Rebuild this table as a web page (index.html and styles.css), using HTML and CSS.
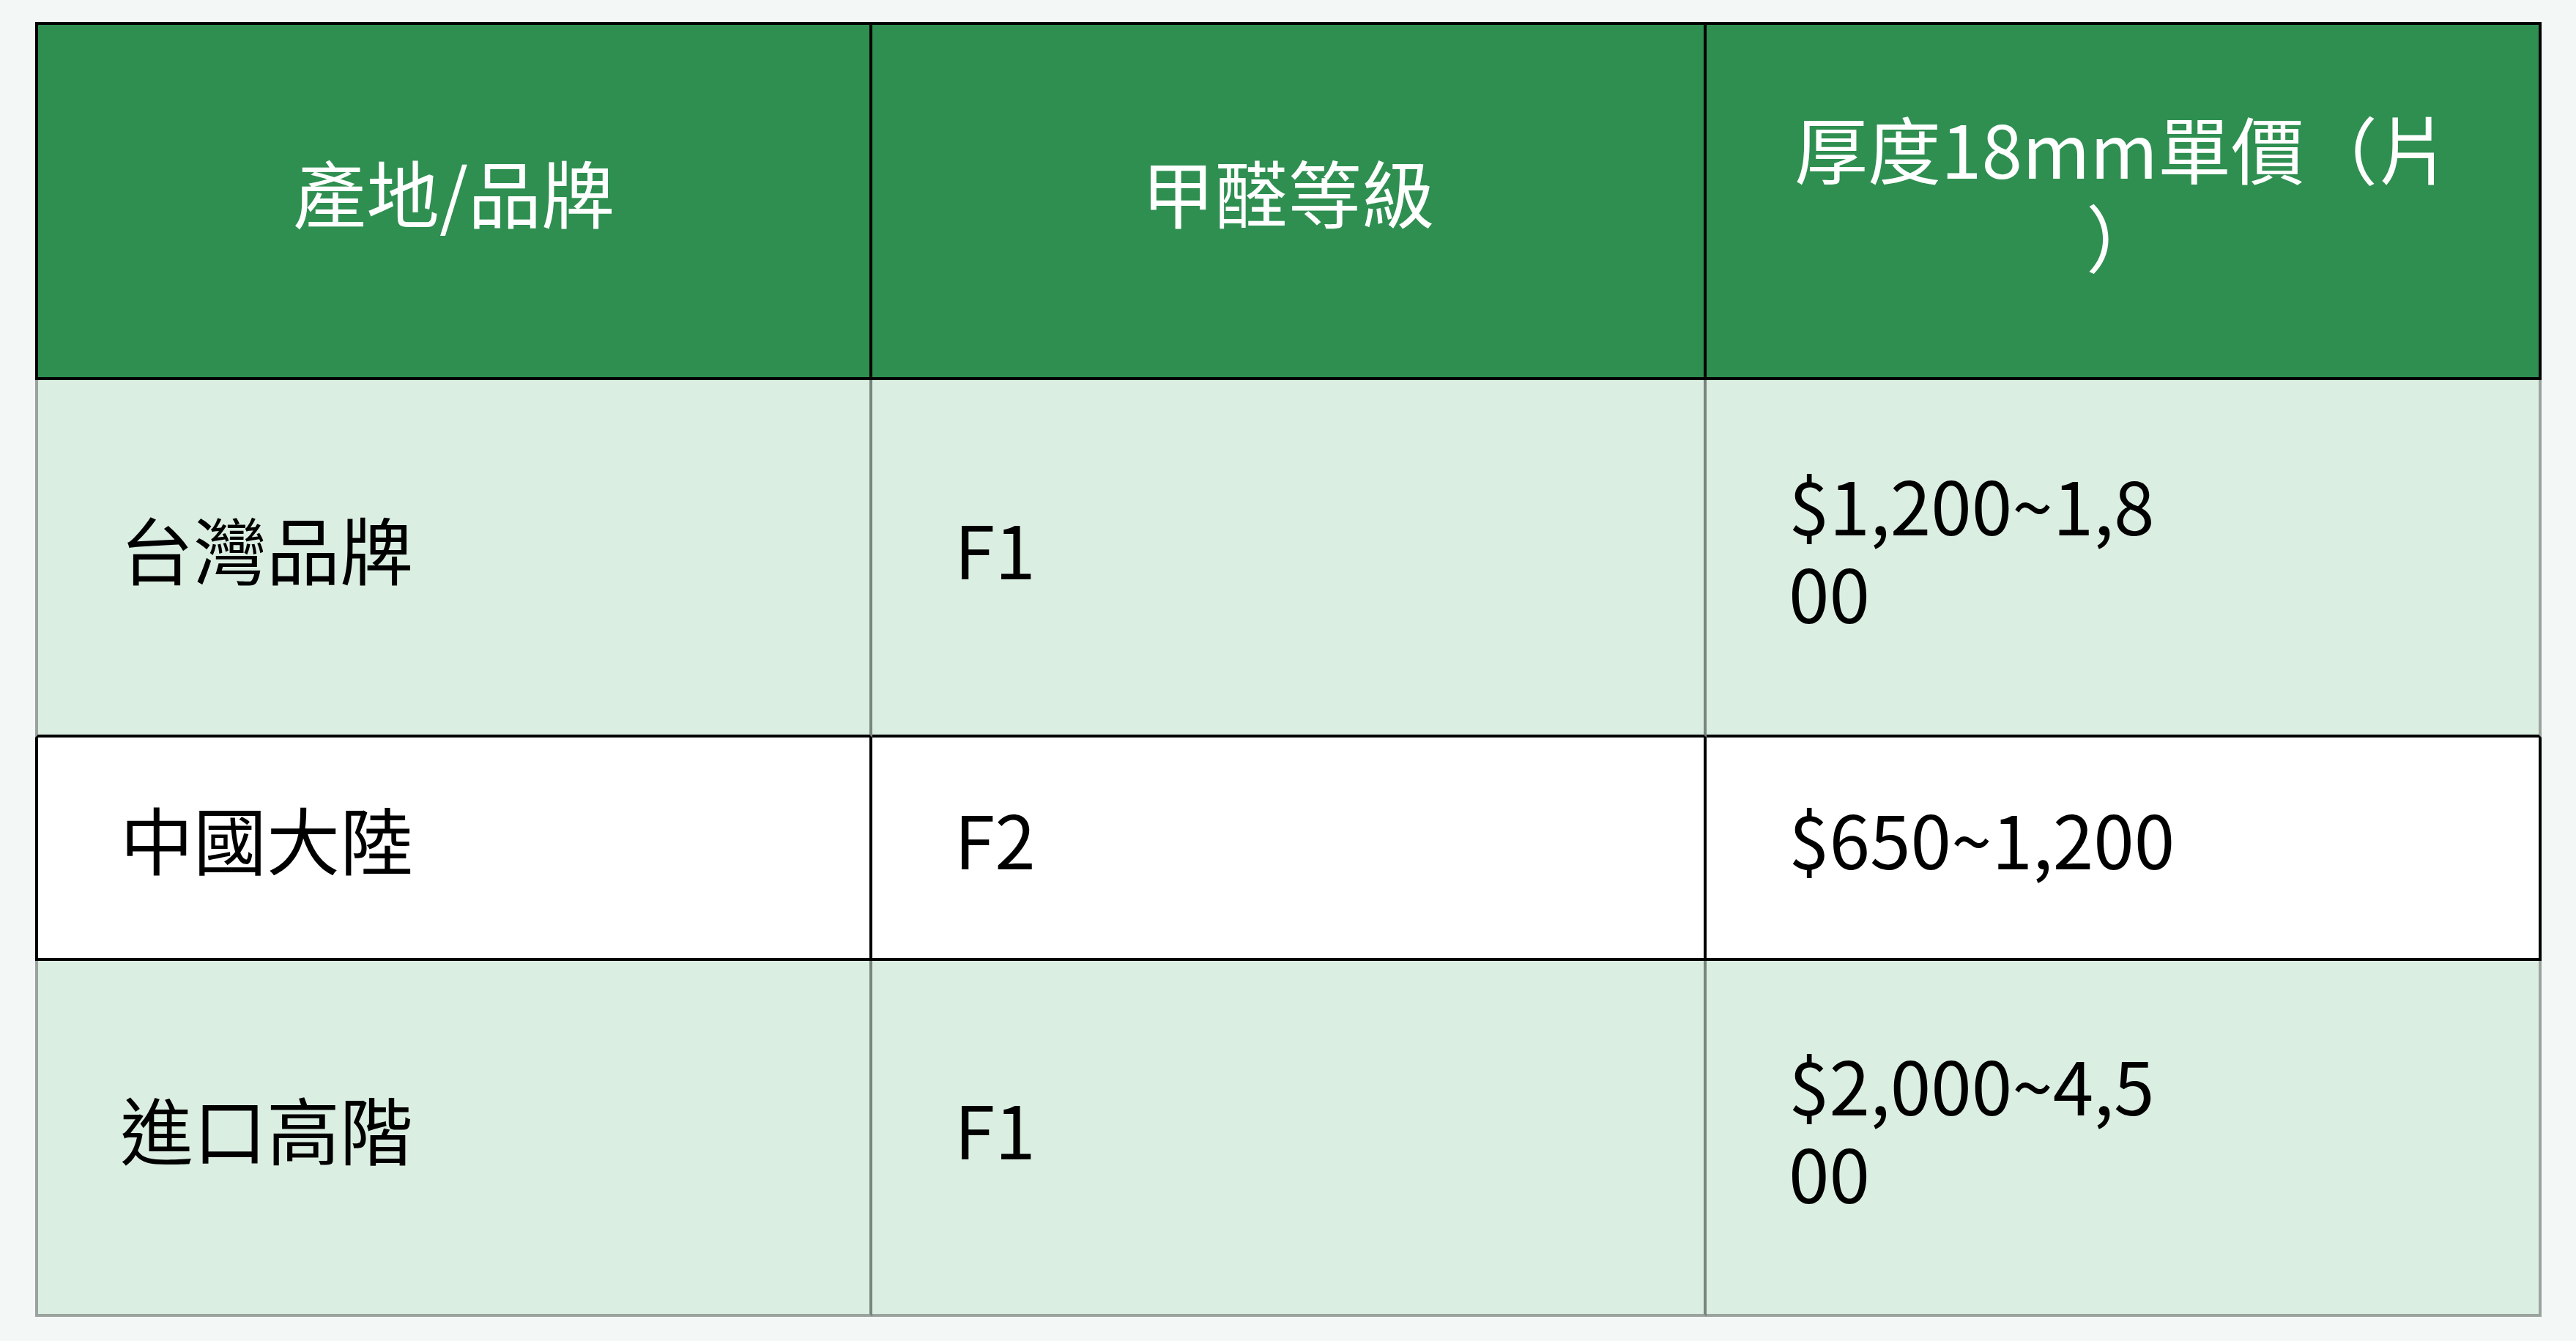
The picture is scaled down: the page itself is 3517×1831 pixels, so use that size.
FILE: index.html
```html
<!DOCTYPE html>
<html lang="zh-Hant">
<head>
<meta charset="utf-8">
<title>板材價格比較</title>
<link rel="stylesheet" href="styles.css">
</head>
<body>
<div class="page">
  <div class="price-table" role="table">
    <div class="cell head first" role="columnheader"><div class="txt">產地/品牌</div></div>
    <div class="cell head" role="columnheader"><div class="txt">甲醛等級</div></div>
    <div class="cell head last-col" role="columnheader"><div class="txt">厚度18mm單價（片）</div></div>

    <div class="cell body tint first" role="cell"><div class="txt">台灣品牌</div></div>
    <div class="cell body tint" role="cell"><div class="txt">F1</div></div>
    <div class="cell body tint last-col" role="cell"><div class="txt">$1,200~1,800</div></div>

    <div class="cell body plain first" role="cell"><div class="txt">中國大陸</div></div>
    <div class="cell body plain" role="cell"><div class="txt">F2</div></div>
    <div class="cell body plain last-col" role="cell"><div class="txt">$650~1,200</div></div>

    <div class="cell body tint bottom first" role="cell"><div class="txt">進口高階</div></div>
    <div class="cell body tint bottom" role="cell"><div class="txt">F1</div></div>
    <div class="cell body tint bottom last-col" role="cell"><div class="txt">$2,000~4,500</div></div>
  </div>
</div>
</body>
</html>
```
FILE: styles.css
```css
html, body {
  margin: 0;
  padding: 0;
  background: #f3f7f6;
}

.page {
  padding: 30px 0 33px 48px;
}

.price-table {
  display: grid;
  grid-template-columns: 1143px 1139px 1140px;
  grid-template-rows: 489px 488px 305px 486px;
  width: 3422px;
  font-family: "Noto Sans CJK TC", "Noto Sans", sans-serif;
  font-size: 100px;
  line-height: 120px;
  font-weight: 400;
}

.cell {
  box-sizing: border-box;
  display: flex;
  align-items: center;
  border-right: 4px solid #000;
  border-bottom: 4px solid #000;
  word-break: break-all;
  line-break: anywhere;
  padding-bottom: 27px;
}

.cell.first {
  border-left: 4px solid #000;
}

/* header */
.head {
  background: #2e8f50;
  color: #fff;
  justify-content: center;
  text-align: center;
  border-top: 4px solid #000;
}

.head .txt {
  max-width: 900px;
}

/* body rows */
.body {
  color: #000;
  justify-content: flex-start;
  text-align: left;
  padding-left: 112px;
}

.body .txt {
  max-width: 536px;
}

.tint {
  background: #dbeee2;
  border-right-color: #7a847e;
}

.tint.first {
  border-left-color: #9ba39f;
}

.tint.last-col {
  border-right-color: #9ba39f;
}

.bottom {
  border-bottom-color: #9ba39f;
}

.plain {
  background: #ffffff;
}

.txt {
  margin: 0;
}
```
